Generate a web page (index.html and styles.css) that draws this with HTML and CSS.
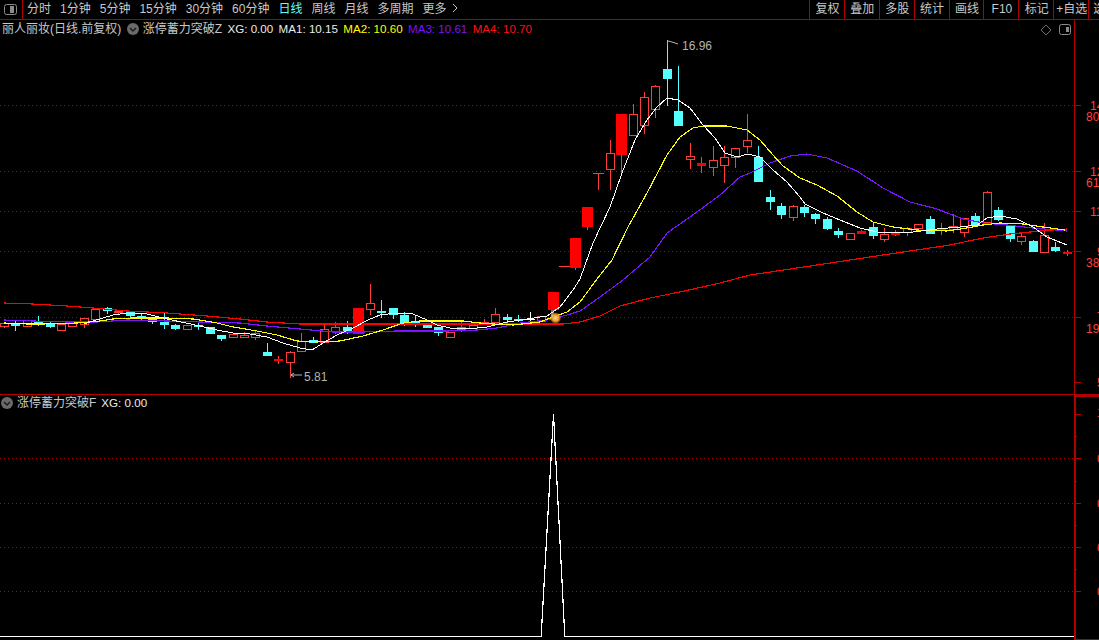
FILE: index.html
```html
<!DOCTYPE html>
<html lang="zh-CN">
<head>
<meta charset="utf-8">
<title>丽人丽妆 日线</title>
<link rel="stylesheet" href="styles.css">
</head>
<body>
<div class="app">
  <header class="toolbar">
    <div class="toggle-cell">
      <svg class="panel-icon" viewBox="0 0 14 12"><rect x="1.5" y="1.5" width="12" height="10" rx="2" class="panel-frame"/><rect x="7" y="3" width="4" height="7" class="panel-fill"/></svg>
    </div>
    <nav class="periods">
      <span>分时</span><span>1分钟</span><span>5分钟</span><span>15分钟</span><span>30分钟</span><span>60分钟</span><span class="active">日线</span><span>周线</span><span>月线</span><span>多周期</span><span>更多 <svg class="more-arrow" viewBox="0 0 6 10"><path d="M1 1l4 4-4 4"/></svg></span>
    </nav>
    <nav class="tools">
      <span>复权</span><span>叠加</span><span>多股</span><span>统计</span><span>画线</span><span>F10</span><span>标记</span><span>+自选</span><span>选股</span>
    </nav>
  </header>

  <section class="pane pane-main">
    <svg id="main-chart" class="chart" viewBox="0 20 1099 374" width="1099" height="374">
      <defs>
        <radialGradient id="glow"><stop offset="0" stop-color="#ffd890"/><stop offset="0.6" stop-color="#f09a28"/><stop offset="1" stop-color="#f09a28" stop-opacity="0.25"/></radialGradient>
      </defs>
      <g id="main-grid"></g>
      <g id="candles"></g>
      <g id="ma-lines"></g>
      <circle cx="555.5" cy="318" r="5.5" fill="url(#glow)"/>
      <path class="glint" d="M552 310v7"/>
      <path class="mark" d="M667.5 40v6M668 41l4 1 6 2"/>
      <text class="mark-text" x="682" y="50">16.96</text>
      <path class="mark" d="M291 375h11M291 375l3 -2M291 375l3 2"/>
      <text class="mark-text" x="304" y="381">5.81</text>
      <text class="axis-text" x="1090" y="110">14</text>
      <text class="axis-text" x="1086" y="121">80</text>
      <text class="axis-text" x="1090" y="176">12</text>
      <text class="axis-text" x="1086" y="187">61</text>
      <text class="axis-text" x="1090" y="216">11</text>
      <text class="axis-text" x="1097" y="256">9</text>
      <text class="axis-text" x="1086" y="267">38</text>
      <text class="axis-text" x="1097" y="321">7</text>
      <text class="axis-text" x="1086" y="333">19</text>
      <text class="axis-text" x="1097" y="387">5</text>
    </svg>
    <div class="legend legend-main">
      <span class="stock">丽人丽妆(日线.前复权)</span>
      <svg class="chevron" viewBox="0 0 12 12"><circle cx="6" cy="6" r="6"/><path d="M3 5l3 3 3-3"/></svg>
      <span class="name">涨停蓄力突破Z</span>
      <span class="white">XG: 0.00</span>
      <span class="white">MA1: 10.15</span>
      <span class="yellow">MA2: 10.60</span>
      <span class="purple">MA3: 10.61</span>
      <span class="red">MA4: 10.70</span>
    </div>
    <div class="pane-tools">
      <svg class="diamond" viewBox="0 0 12 12"><path d="M6 1l5 5-5 5-5-5z"/></svg>
      <svg class="panel-icon" viewBox="0 0 14 12"><rect x="1.5" y="0.5" width="11" height="10" rx="2" class="panel-frame"/><rect x="8" y="3" width="3" height="5" class="panel-fill"/></svg>
    </div>
  </section>

  <section class="pane pane-sub">
    <svg id="sub-chart" class="chart" viewBox="0 395 1099 245" width="1099" height="245">
      <g id="sub-grid"></g>
      <polyline class="signal" points="0,636.5 541.5,636.5 541.5,630 553.5,414 564.5,630 564.5,636.5 1074,636.5"/>
      <text class="axis-text" x="1097" y="417">1</text>
      <text class="axis-text" x="1097" y="463">0</text>
      <text class="axis-text" x="1097" y="508">0</text>
      <text class="axis-text" x="1097" y="552">0</text>
      <text class="axis-text" x="1097" y="596">0</text>
    </svg>
    <div class="legend legend-sub">
      <svg class="chevron" viewBox="0 0 12 12"><circle cx="6" cy="6" r="6"/><path d="M3 5l3 3 3-3"/></svg>
      <span class="name">涨停蓄力突破F</span>
      <span class="white">XG: 0.00</span>
    </div>
  </section>
</div>
<script src="chart.js"></script>
</body>
</html>
```
FILE: styles.css
```css
* { box-sizing: border-box; }
html, body { margin: 0; padding: 0; background: #000; }
body { font-family: "Liberation Sans", "Noto Sans CJK SC", sans-serif; color: #c8c8c8; }
.app { width: 1099px; height: 640px; overflow: hidden; display: flex; flex-direction: column; background: #000; }

.toolbar { flex: none; height: 20px; display: flex; border-bottom: 1px solid #b00000; font-size: 12px; line-height: 18px; white-space: nowrap; }
.toggle-cell { width: 23px; flex: none; border-right: 1px solid #b00000; padding: 3px 0 0 3px; }
.panel-icon { display: block; width: 14px; height: 12px; }
.panel-frame { fill: none; stroke: #8c8c8c; stroke-width: 1; }
.panel-fill { fill: #8c8c8c; }
.periods { display: flex; gap: 9px; padding-left: 4px; }
.periods .active { color: #5fffff; }
.more-arrow { width: 6px; height: 10px; margin-left: 2px; }
.more-arrow path { fill: none; stroke: #c8c8c8; stroke-width: 1; }
.tools { margin-left: auto; display: flex; width: 291px; flex: none; margin-right: -1px; }
.tools span { flex: none; width: 34.9px; border-left: 1px solid #b00000; text-align: center; padding-left: 1px; }
.tools span:last-child { text-align: left; padding-left: 4px; width: 12px; overflow: hidden; }

.pane { position: relative; flex: none; }
.pane-main { height: 375px; border-bottom: 1px solid #b00000; }
.pane-sub { height: 245px; }
.chart { display: block; }

.legend { position: absolute; display: flex; align-items: center; font-size: 12px; line-height: 16px; white-space: nowrap; }
.legend-main { left: 2px; top: 1px; gap: 5.4px; }
.legend-sub { left: 1px; top: 0; gap: 5px; }
.legend .white, .legend .yellow, .legend .purple, .legend .red { font-size: 11.6px; }
.chevron { width: 12px; height: 12px; flex: none; }
.legend-main .chevron { margin-right: -1.4px; }
.legend-sub .chevron { margin-right: -1px; }
.chevron circle { fill: #6a6a6a; }
.chevron path { fill: none; stroke: #1c1c1c; stroke-width: 1.5; }
.stock, .name { color: #c8c8c8; }
.white { color: #ececec; }
.yellow { color: #ffff00; }
.purple { color: #7a14ff; }
.red { color: #ff1010; }

.pane-tools { position: absolute; right: 27px; top: 4px; display: flex; align-items: flex-start; gap: 6px; }
.diamond { width: 12px; height: 12px; }
.diamond path { fill: none; stroke: #6e6e6e; stroke-width: 1; }

.wick, .hollow, .solid-red, .solid-cyan, .solid-white, .ma, .signal, .grid-dot, .axis-line { shape-rendering: crispEdges; }
.wick { stroke-width: 1; fill: none; }
.wick-red { stroke: #ff3c3c; }
.wick-cyan { stroke: #54ffff; }
.wick-white { stroke: #ffffff; }
.hollow { fill: #000; stroke: #ff3c3c; stroke-width: 1; }
.solid-red { fill: #ff0000; }
.solid-cyan { fill: #54ffff; }
.solid-white { fill: #ffffff; }
.ma { fill: none; stroke-width: 1.15; }
.ma1 { stroke: #ffffff; stroke-width: 1; }
.ma2 { stroke: #ffff00; }
.ma3 { stroke: #7a14ff; }
.ma4 { stroke: #ff0000; }
.signal { fill: none; stroke: #ffffff; stroke-width: 1.2; }
.grid-dot { stroke: #b00000; stroke-width: 1; stroke-dasharray: 1 3; }
.axis-line { stroke: #b00000; stroke-width: 1; fill: none; }
.axis-thick { stroke-width: 2; }
.axis-text { fill: #ff4040; font-size: 12px; font-family: "Liberation Sans", sans-serif; }
.mark { fill: none; stroke: #b4b4b4; stroke-width: 1; }
.mark-text { fill: #b4b4b4; font-size: 12px; font-family: "Liberation Sans", sans-serif; }
.glint { fill: none; stroke: #f4e8d0; stroke-width: 1; }
```
FILE: chart.js
```js
var NS = "http://www.w3.org/2000/svg";
function el(parent, tag, attrs) {
  var n = document.createElementNS(NS, tag);
  for (var k in attrs) n.setAttribute(k, attrs[k]);
  parent.appendChild(n);
  return n;
}

/* type, high, body top, body bottom, low (page pixel rows) */
var candles = [
["h",323,323,326,327],["c",320,324,325,330],["h",320,320,326,326],["c",316,321,324,325],["c",322,324,326,327],
["h",324,324,330,330],["h",322,322,326,326],["h",318,318,324,327],["h",309,309,319,319],["c",307,308,310,313],
["h",310,311,312,313],["c",312,312,315,317],["c",313,316,318,319],["c",317,319,321,323],["c",313,322,324,328],
["c",324,325,328,329],["h",325,325,329,329],["c",322,325,326,329],["c",327,327,333,333],["c",335,335,338,340],
["h",334,334,337,337],["h",332,335,337,337],["h",330,333,337,339],["c",343,352,355,355],["r",356,359,360,363],
["h",351,352,362,377],["h",333,341,351,351],["c",337,340,342,342],["h",323,329,342,342],["h",322,327,331,333],
["c",321,327,330,333],["r",308,308,333,333],["h",284,303,309,314],["c",300,311,312,317],["c",308,308,314,318],
["c",312,315,323,325],["c",315,321,323,326],["c",323,325,327,327],["c",327,327,332,335],["h",332,332,337,337],
["h",322,327,329,331],["h",325,325,328,328],["h",319,322,324,324],["h",308,314,322,324],["c",314,317,319,322],
["c",315,319,320,321],["w",312,319,320,320],["h",316,316,321,321],["r",292,292,309,316],["r",266,266,266,266],
["r",238,238,267,269],["r",207,207,226,229],["r",173,173,173,190],["h",140,153,169,189],["r",114,114,154,175],
["h",104,114,135,135],["h",92,97,125,133],["h",85,86,109,117],["c",40,69,78,105],["c",66,111,125,125],
["h",143,156,159,168],["r",157,163,165,172],["h",146,160,167,175],["h",146,157,165,182],["h",148,148,157,167],
["h",114,140,146,152],["c",146,157,181,181],["c",190,197,201,209],["c",203,206,214,218],["h",205,206,217,220],
["c",205,207,212,216],["c",213,214,218,223],["c",217,219,228,229],["c",228,231,234,237],["h",233,233,239,239],
["r",230,231,233,233],["c",223,227,235,238],["h",228,234,239,241],["r",230,232,234,235],["h",227,228,232,235],
["h",224,224,228,231],["c",216,219,233,233],["r",223,228,230,234],["h",214,226,229,232],["h",218,218,232,236],
["c",213,216,225,225],["h",191,192,222,222],["c",207,210,219,220],["c",225,226,238,241],["h",233,236,241,244],
["c",240,241,251,251],["h",223,235,252,252],["c",242,247,250,251],["r",250,252,253,255]
];

var gC = document.getElementById("candles");
candles.forEach(function (c, i) {
  var cx = Math.round(3.9 + 11.43 * i);
  var t = c[0], hi = c[1], top = c[2], bot = c[3], lo = c[4];
  var wickCls = t === "c" ? "wick wick-cyan" : t === "w" ? "wick wick-white" : "wick wick-red";
  if (t === "r" && top === bot) {
    el(gC, "line", { x1: cx - 5, x2: cx + 6, y1: top + .5, y2: top + .5, "class": "wick wick-red" });
    if (lo > bot) el(gC, "line", { x1: cx + .5, x2: cx + .5, y1: top, y2: lo, "class": wickCls });
    return;
  }
  el(gC, "line", { x1: cx + .5, x2: cx + .5, y1: hi, y2: lo + 1, "class": wickCls });
  if (t === "h") {
    el(gC, "rect", { x: cx - 3.5, y: top + .5, width: 8, height: Math.max(bot - top, 1), "class": "hollow" });
  } else if (t === "c") {
    el(gC, "rect", { x: cx - 4, y: top, width: 9, height: Math.max(bot - top, 1) + 1, "class": "solid-cyan" });
  } else if (t === "w") {
    el(gC, "rect", { x: cx - 4, y: top, width: 9, height: 1, "class": "solid-white" });
  } else {
    var w = bot - top > 4 ? 11 : 9;
    el(gC, "rect", { x: cx + .5 - w / 2, y: top, width: w, height: bot - top + 1, "class": "solid-red" });
  }
});

var ma = {
  ma4: "4,303 33,304 67,306 93,308 127,311 167,313 207,316 240,319 267,322 300,324 380,324 447,324 513,324 563,324 580,322 600,316 620,306 650,298 680,292 720,283 750,275 817,265 883,255 950,245 983,238 1010,234 1040,231 1067,229",
  ma3: "4,320 33,321 67,322 97,322 127,320 167,321 200,322 240,323 267,326 300,329 333,332 363,332 397,331 423,331 447,331 477,330 497,328 520,323 547,320 567,315 580,311 600,297 623,280 650,257 667,233 690,217 720,195 740,177 750,173 770,163 790,156 807,154 827,158 857,171 883,188 910,202 937,209 963,219 983,223 1007,225 1033,228 1067,231",
  ma2: "4,323 27,324 43,324 77,323 100,321 113,319 133,318 167,318 193,319 217,323 233,327 257,331 277,335 297,341 317,342 340,341 363,336 383,330 403,323 420,321 443,321 463,321 480,323 493,324 513,325 540,322 553,317 567,312 580,302 597,279 612,260 628,227 647,193 667,155 680,137 693,128 703,126 727,126 747,130 760,140 773,155 783,166 800,178 817,185 837,196 857,212 873,222 893,227 917,230 947,231 967,228 983,225 1000,223 1023,224 1043,227 1065,230",
  ma1: "4,323 50,324 84,324 93,321 113,315 127,313 147,314 167,319 200,326 217,330 233,333 250,334 267,337 283,343 300,348 312,350 323,343 337,335 353,328 368,320 380,315 397,313 413,314 427,320 437,325 450,328 467,329 487,327 507,322 527,319 547,316 560,307 573,290 580,279 593,243 610,207 622,173 635,140 647,120 657,107 667,98 678,100 690,108 703,125 715,138 725,153 737,157 748,154 760,157 773,170 787,182 800,197 805,204 823,213 840,220 860,228 877,232 893,233 913,232 937,229 960,227 977,225 987,218 1000,216 1017,219 1033,227 1047,237 1067,245"
};
var gM = document.getElementById("ma-lines");
["ma4", "ma3", "ma2", "ma1"].forEach(function (k) {
  el(gM, "polyline", { points: ma[k], "class": "ma " + k });
});

function grid(id, rows, end) {
  var g = document.getElementById(id);
  rows.forEach(function (y) {
    el(g, "line", { x1: 0, x2: end, y1: y + .5, y2: y + .5, "class": "grid-dot" });
  });
}
function ticks(id, rows, x, len) {
  var g = document.getElementById(id);
  rows.forEach(function (y) {
    el(g, "line", { x1: x, x2: x + len, y1: y + .5, y2: y + .5, "class": "axis-line" });
  });
}

grid("main-grid", [105, 171, 211, 251, 317], 1074);
ticks("main-grid", [105, 171, 211, 251, 317, 382], 1074, 7);
el(document.getElementById("main-grid"), "line", { x1: 1074.5, x2: 1074.5, y1: 20, y2: 394, "class": "axis-line" });

grid("sub-grid", [458, 503, 547, 591], 1074);
var gS = document.getElementById("sub-grid");
el(gS, "line", { x1: 1075, x2: 1075, y1: 395, y2: 640, "class": "axis-line axis-thick" });
el(gS, "line", { x1: 1074, x2: 1099, y1: 395.5, y2: 395.5, "class": "axis-line axis-thick" });
el(gS, "line", { x1: 1074, x2: 1099, y1: 639.5, y2: 639.5, "class": "axis-line" });
ticks("sub-grid", [414, 458, 503, 547, 591], 1075, 6);
ticks("sub-grid", [436, 481, 525, 569], 1075, 2);
```
